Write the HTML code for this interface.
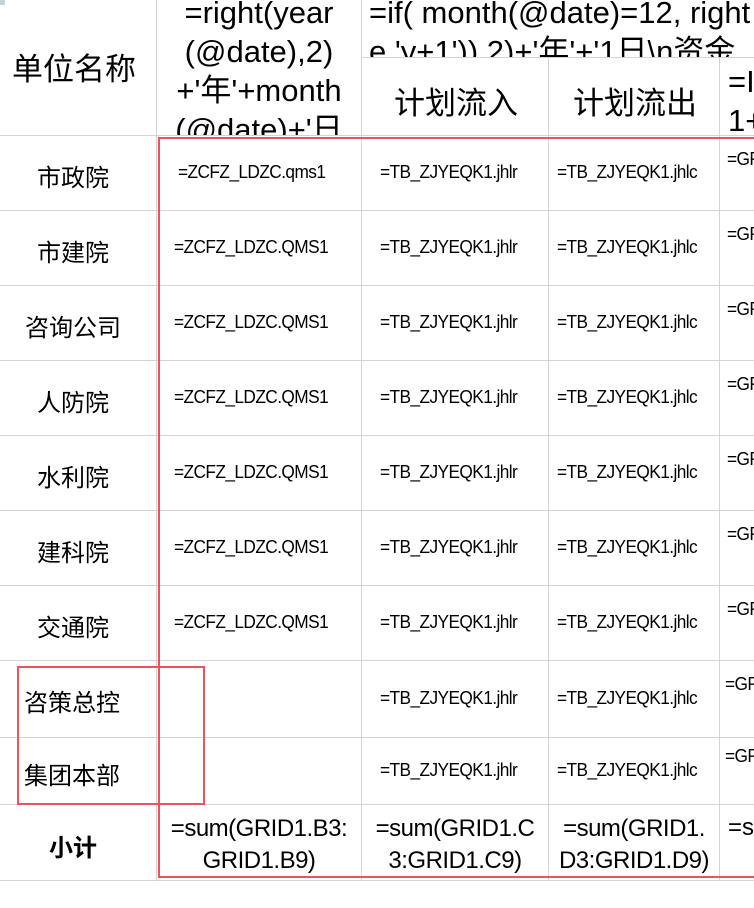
<!DOCTYPE html>
<html><head><meta charset="utf-8"><style>
body{margin:0;width:754px;height:908px;background:#fff;position:relative;overflow:hidden;font-family:"Liberation Sans","Noto Sans CJK SC",sans-serif;color:#000}
.h{position:absolute;height:1px;background:#d4d4d4}
.v{position:absolute;width:1px;background:#d4d4d4}
.t{position:absolute;white-space:nowrap}
.c{position:absolute;white-space:nowrap;font-size:18px;letter-spacing:-0.6px;transform:scaleX(0.96);transform-origin:0 0}
.n{position:absolute;width:146px;text-align:center;font-size:24px}
.r{position:absolute;border:2px solid #f1525a}
</style></head><body>
<div class="v" style="left:156px;top:0;height:880px"></div>
<div class="v" style="left:361px;top:0;height:880px"></div>
<div class="v" style="left:548px;top:57px;height:823px"></div>
<div class="v" style="left:719px;top:57px;height:823px"></div>
<div class="h" style="left:361px;top:57px;width:393px"></div>
<div class="h" style="left:0;top:135px;width:754px"></div>
<div class="h" style="left:0;top:210px;width:754px"></div>
<div class="h" style="left:0;top:285px;width:754px"></div>
<div class="h" style="left:0;top:360px;width:754px"></div>
<div class="h" style="left:0;top:435px;width:754px"></div>
<div class="h" style="left:0;top:510px;width:754px"></div>
<div class="h" style="left:0;top:585px;width:754px"></div>
<div class="h" style="left:0;top:660px;width:754px"></div>
<div class="h" style="left:0;top:737px;width:754px"></div>
<div class="h" style="left:0;top:804px;width:754px"></div>
<div class="h" style="left:0;top:880px;width:754px"></div>
<div style="position:absolute;left:0;top:0;width:5px;height:5px;background:#c8d0e0"></div>

<div class="t" style="left:12px;top:44px;font-size:31px">单位名称</div>
<div style="position:absolute;left:157px;top:0;width:204px;height:135px;overflow:hidden">
<div class="t" style="left:0;width:204px;text-align:center;top:-7px;font-size:31px;line-height:39px">=right(year<br>(@date),2)<br>+'年'+month<br>(@date)+'日</div></div>
<div style="position:absolute;left:362px;top:0;width:392px;height:57px;overflow:hidden">
<div class="t" style="left:7px;top:-7px;font-size:31px;line-height:39px">=if( month(@date)=12, right<br>e 'y+1')) 2)+'年'+'1日\n资金</div></div>
<div class="t" style="left:394px;top:78px;font-size:31px">计划流入</div>
<div class="t" style="left:573px;top:78px;font-size:31px">计划流出</div>
<div style="position:absolute;left:720px;top:58px;width:34px;height:77px;overflow:hidden"><div class="t" style="left:8px;top:4px;font-size:31px;line-height:39px">=I<br>1+</div></div>

<div class="n" style="left:0;top:158px">市政院</div>
<div class="n" style="left:0;top:233px">市建院</div>
<div class="n" style="left:0;top:308px">咨询公司</div>
<div class="n" style="left:0;top:383px">人防院</div>
<div class="n" style="left:0;top:458px">水利院</div>
<div class="n" style="left:0;top:533px">建科院</div>
<div class="n" style="left:0;top:608px">交通院</div>
<div class="t" style="left:24px;top:683px;font-size:24px">咨策总控</div>
<div class="t" style="left:24px;top:756px;font-size:24px">集团本部</div>
<div class="n" style="left:0;top:828px;font-weight:bold">小计</div>

<div class="c" style="left:178px;top:162px">=ZCFZ_LDZC.qms1</div>
<div class="c" style="left:174px;top:237px">=ZCFZ_LDZC.QMS1</div>
<div class="c" style="left:174px;top:312px">=ZCFZ_LDZC.QMS1</div>
<div class="c" style="left:174px;top:387px">=ZCFZ_LDZC.QMS1</div>
<div class="c" style="left:174px;top:462px">=ZCFZ_LDZC.QMS1</div>
<div class="c" style="left:174px;top:537px">=ZCFZ_LDZC.QMS1</div>
<div class="c" style="left:174px;top:612px">=ZCFZ_LDZC.QMS1</div>

<div class="c" style="left:380px;top:162px">=TB_ZJYEQK1.jhlr</div>
<div class="c" style="left:380px;top:237px">=TB_ZJYEQK1.jhlr</div>
<div class="c" style="left:380px;top:312px">=TB_ZJYEQK1.jhlr</div>
<div class="c" style="left:380px;top:387px">=TB_ZJYEQK1.jhlr</div>
<div class="c" style="left:380px;top:462px">=TB_ZJYEQK1.jhlr</div>
<div class="c" style="left:380px;top:537px">=TB_ZJYEQK1.jhlr</div>
<div class="c" style="left:380px;top:612px">=TB_ZJYEQK1.jhlr</div>
<div class="c" style="left:380px;top:688px">=TB_ZJYEQK1.jhlr</div>
<div class="c" style="left:380px;top:760px">=TB_ZJYEQK1.jhlr</div>

<div class="c" style="left:557px;top:162px">=TB_ZJYEQK1.jhlc</div>
<div class="c" style="left:557px;top:237px">=TB_ZJYEQK1.jhlc</div>
<div class="c" style="left:557px;top:312px">=TB_ZJYEQK1.jhlc</div>
<div class="c" style="left:557px;top:387px">=TB_ZJYEQK1.jhlc</div>
<div class="c" style="left:557px;top:462px">=TB_ZJYEQK1.jhlc</div>
<div class="c" style="left:557px;top:537px">=TB_ZJYEQK1.jhlc</div>
<div class="c" style="left:557px;top:612px">=TB_ZJYEQK1.jhlc</div>
<div class="c" style="left:557px;top:688px">=TB_ZJYEQK1.jhlc</div>
<div class="c" style="left:557px;top:760px">=TB_ZJYEQK1.jhlc</div>

<div style="position:absolute;left:720px;top:136px;width:34px;height:744px;overflow:hidden">
<div class="c" style="left:7px;top:13px">=GRID</div>
<div class="c" style="left:7px;top:88px">=GRID</div>
<div class="c" style="left:7px;top:163px">=GRID</div>
<div class="c" style="left:7px;top:238px">=GRID</div>
<div class="c" style="left:7px;top:313px">=GRID</div>
<div class="c" style="left:7px;top:388px">=GRID</div>
<div class="c" style="left:7px;top:463px">=GRID</div>
<div class="c" style="left:5px;top:538px">=GRID</div>
<div class="c" style="left:5px;top:610px">=GRID</div>
<div class="t" style="left:8px;top:678px;font-size:24px">=sum</div>
</div>

<div class="t" style="left:157px;top:813px;width:204px;text-align:center;font-size:24px;line-height:32px;letter-spacing:-0.5px">=sum(GRID1.B3:<br>GRID1.B9)</div>
<div class="t" style="left:362px;top:813px;width:186px;text-align:center;font-size:24px;line-height:32px;letter-spacing:-0.5px">=sum(GRID1.C<br>3:GRID1.C9)</div>
<div class="t" style="left:549px;top:813px;width:170px;text-align:center;font-size:24px;line-height:32px;letter-spacing:-0.5px">=sum(GRID1.<br>D3:GRID1.D9)</div>

<div class="r" style="left:158px;top:137px;width:600px;height:737px"></div>
<div class="r" style="left:17px;top:666px;width:184px;height:135px"></div>
</body></html>
